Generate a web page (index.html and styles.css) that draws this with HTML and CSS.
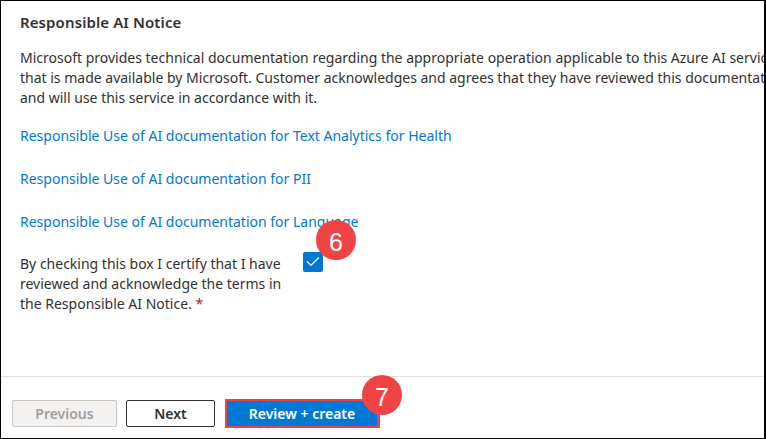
FILE: index.html
```html
<!DOCTYPE html>
<html lang="en">
<head>
<meta charset="utf-8">
<title>Responsible AI Notice</title>
<link rel="stylesheet" href="styles.css">
</head>
<body>
<div class="frame">
  <main class="content">
    <h2 class="title">Responsible AI Notice</h2>
    <p class="notice">Microsoft provides technical documentation regarding the appropriate operation applicable to this Azure AI service<br>that is made available by Microsoft. Customer acknowledges and agrees that they have reviewed this documentation<br>and will use this service in accordance with it.</p>
    <a class="doc-link first" href="#">Responsible Use of AI documentation for Text Analytics for Health</a>
    <a class="doc-link" href="#">Responsible Use of AI documentation for PII</a>
    <a class="doc-link" href="#">Responsible Use of AI documentation for Language</a>
    <div class="consent">
      <label class="consent-text" for="ack">By checking this box I certify that I have<br>reviewed and acknowledge the terms in<br>the Responsible AI Notice. <span class="req">*</span></label>
      <span class="checkbox" id="ack" role="checkbox" aria-checked="true">
        <svg class="check" width="20" height="20" viewBox="0 0 20 20"><path d="M4.2 9.6 L8 13.3 L15.6 5.8" fill="none" stroke="#fff" stroke-width="1.2" stroke-linecap="round" stroke-linejoin="round"/></svg>
        <span class="badge badge-6">6</span>
      </span>
    </div>
  </main>
  <footer class="footer">
    <button class="btn btn-prev" disabled>Previous</button>
    <button class="btn btn-next">Next</button>
    <button class="btn btn-primary">Review + create<span class="badge badge-7">7</span></button>
  </footer>
</div>
</body>
</html>
```
FILE: styles.css
```css
* { box-sizing: border-box; }
html, body { margin: 0; padding: 0; background: #fff; }
body { font-family: "Noto Sans", "Open Sans", sans-serif; color: #323130; }

.frame {
  width: 766px;
  height: 439px;
  border: 1px solid #000;
  border-right-width: 2px;
  display: flex;
  flex-direction: column;
  overflow: hidden;
}

.content {
  flex: 1;
  padding: 11px 0 0 19px;
  display: flex;
  flex-direction: column;
  align-items: flex-start;
  min-width: 0;
}

.title {
  margin: 0;
  font-size: 15px;
  font-weight: 600;
  line-height: 20px;
  letter-spacing: 0.1px;
  color: #323130;
}

.notice {
  margin: 16px 0 0;
  font-size: 14px;
  line-height: 20px;
  white-space: nowrap;
  color: #323130;
}

.doc-link {
  margin-top: 23px;
  font-size: 14px;
  line-height: 20px;
  color: #0078d4;
  text-decoration: none;
  white-space: nowrap;
}
.doc-link.first { margin-top: 18px; }

.consent {
  margin-top: 20px;
  display: flex;
  align-items: flex-start;
  gap: 0;
}

.consent-text {
  width: 283px;
  padding-top: 2px;
  font-size: 14px;
  line-height: 20px;
  white-space: nowrap;
  color: #323130;
}

.req { color: #a4262c; }

.checkbox {
  position: relative;
  width: 20px;
  height: 20px;
  border-radius: 2px;
  background: #0078d4;
  display: block;
}
.check { display: block; }

.badge {
  position: absolute;
  width: 40px;
  height: 40px;
  border-radius: 50%;
  background: #f04444;
  color: #fff;
  font-family: "Liberation Sans", Arial, sans-serif;
  font-size: 25px;
  font-weight: 400;
  line-height: 40px;
  text-align: center;
  padding-top: 2px;
}
.badge-6 { left: 13px; top: -32px; }
.badge-7 { left: 135px; top: -26px; }

.footer {
  height: 62px;
  border-top: 1px solid #e1dfdd;
  padding: 22px 0 0 11px;
  display: flex;
  align-items: flex-start;
}

.btn {
  height: 27px;
  margin-top: 1px;
  padding: 0;
  border-radius: 2px;
  font-family: "Noto Sans", "Open Sans", sans-serif;
  font-size: 14px;
  font-weight: 600;
  line-height: 20px;
}

.btn-prev {
  width: 105px;
  background: #f3f2f1;
  border: 1px solid #c8c6c4;
  color: #a19f9d;
}

.btn-next {
  width: 89px;
  margin-left: 9px;
  background: #fff;
  border: 1px solid #323130;
  color: #323130;
}

.btn-primary {
  position: relative;
  width: 155px;
  height: 29px;
  margin-top: 0;
  margin-left: 10px;
  background: #0078d4;
  border: 2px solid #e8434a;
  border-right-width: 3px;
  border-radius: 0;
  color: #fff;
}
```
